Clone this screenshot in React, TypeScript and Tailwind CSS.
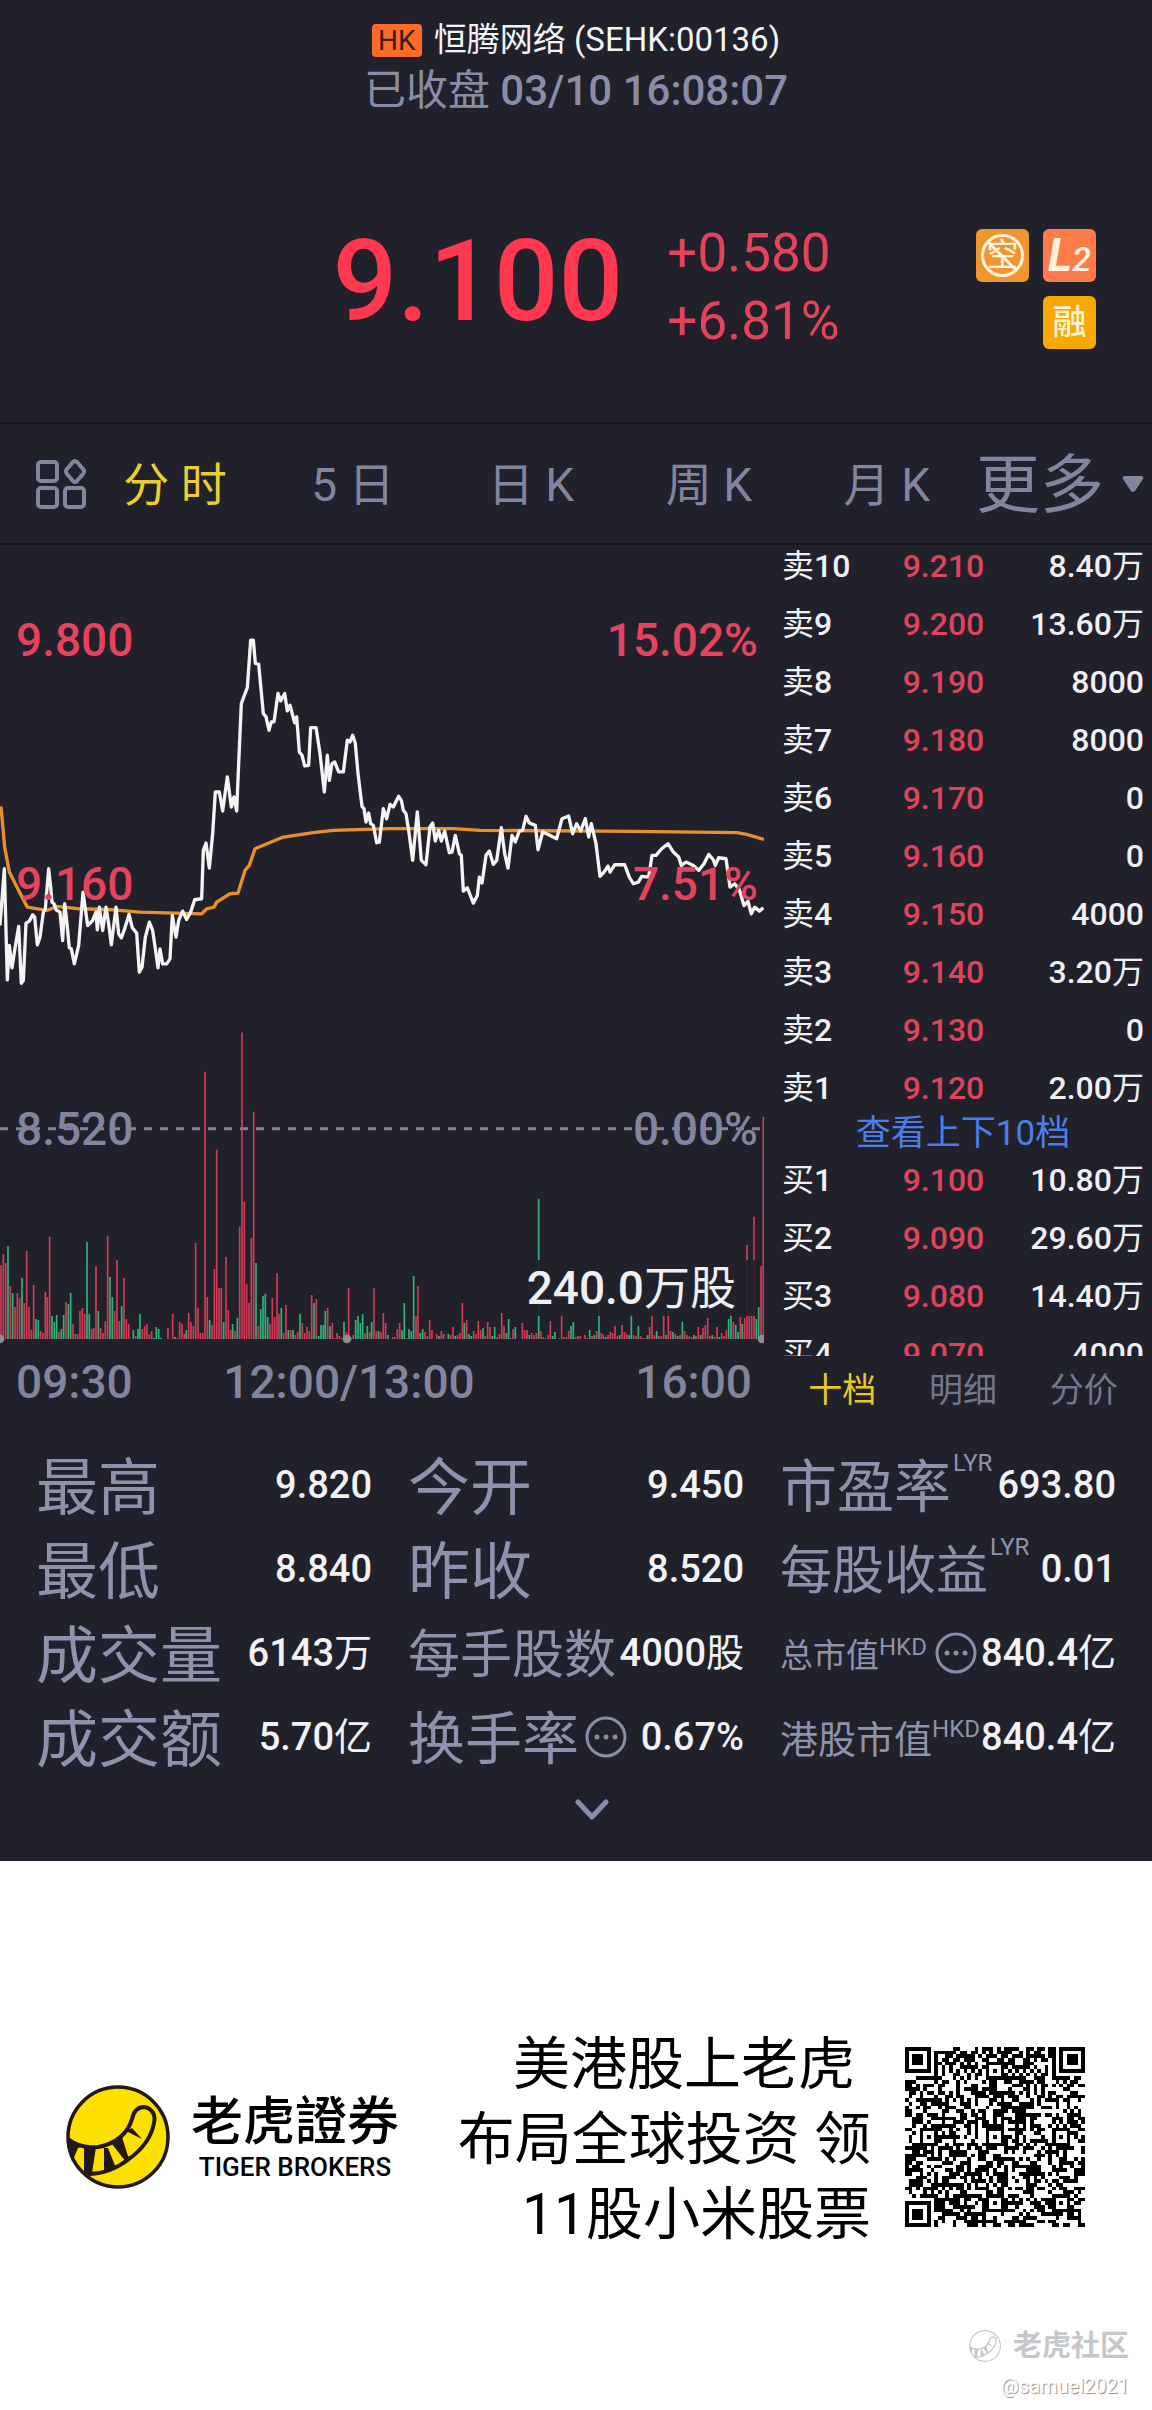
import type { ReactNode } from 'react';

type BookRow = [side: string, price: string, size: string];

const periods = ['分 时', '5 日', '日 K', '周 K', '月 K'];

const asks: BookRow[] = [
  ['卖10', '9.210', '8.40万'],
  ['卖9', '9.200', '13.60万'],
  ['卖8', '9.190', '8000'],
  ['卖7', '9.180', '8000'],
  ['卖6', '9.170', '0'],
  ['卖5', '9.160', '0'],
  ['卖4', '9.150', '4000'],
  ['卖3', '9.140', '3.20万'],
  ['卖2', '9.130', '0'],
  ['卖1', '9.120', '2.00万'],
];

const bids: BookRow[] = [
  ['买1', '9.100', '10.80万'],
  ['买2', '9.090', '29.60万'],
  ['买3', '9.080', '14.40万'],
  ['买4', '9.070', '4000'],
];

// Price and average lines, three units per pixel
const pricePoints =
  '0,975 13,805 22,1138 28,1035 36,1102 44,1050 56,978 64,1148 70,1140 78,968 88,962 98,943 104,950 112,1033 120,1010 130,935 136,925 146,805 152,860 156,905 162,910 168,928 180,935 188,1020 194,910 200,960 208,1042 214,1045 223,1090 236,1035 249,875 258,940 263,975 278,960 288,935 292,988 298,920 308,990 318,920 326,970 334,1033 348,920 356,1000 364,1012 374,985 387,942 397,982 410,998 418,1115 426,1100 436,1010 448,965 458,990 466,1045 474,1102 480,1045 488,1090 500,1090 510,1075 517,945 528,1010 536,960 548,932 560,957 572,935 584,898 605,895 610,750 618,728 628,803 638,700 646,575 658,575 668,632 682,530 694,620 702,590 710,632 716,490 724,310 742,262 752,120 760,120 766,190 776,192 790,340 798,350 807,390 814,365 822,365 834,280 842,302 854,280 862,332 870,315 884,368 890,350 898,455 906,465 914,497 926,495 932,382 948,382 960,460 973,575 982,465 988,540 996,490 1004,485 1016,515 1030,515 1042,420 1050,425 1058,405 1066,430 1074,520 1086,618 1092,625 1098,665 1106,638 1112,670 1120,675 1130,727 1138,725 1150,625 1160,655 1170,612 1180,620 1196,588 1204,600 1210,630 1218,640 1226,690 1238,780 1252,635 1264,780 1278,793 1290,680 1298,668 1306,722 1316,690 1324,722 1334,692 1348,757 1356,755 1366,705 1378,760 1384,765 1390,872 1402,862 1420,908 1432,885 1438,830 1446,848 1458,765 1468,752 1480,792 1490,780 1504,682 1514,760 1524,803 1536,705 1546,725 1558,692 1568,690 1578,648 1588,668 1606,675 1614,748 1628,695 1646,703 1670,715 1686,655 1706,647 1718,700 1730,670 1742,692 1756,655 1766,710 1774,670 1788,730 1800,828 1812,815 1824,797 1830,815 1844,793 1874,793 1888,830 1900,850 1915,845 1925,828 1946,830 1956,765 1968,765 1985,745 2004,730 2020,755 2036,770 2044,795 2058,785 2080,795 2096,810 2112,790 2126,762 2140,778 2146,795 2156,772 2178,775 2190,860 2204,850 2218,868 2232,915 2244,903 2254,940 2264,920 2278,932 2290,922';
const averagePoints =
  '3,618 14,740 28,815 56,870 82,920 140,930 170,918 240,925 340,928 420,935 605,940 620,925 642,920 650,905 690,880 714,878 735,810 748,795 765,745 850,710 940,697 1000,690 1170,685 1360,685 1440,690 1900,693 2210,697 2240,702 2292,717';

// One entry per minute; a negative value is a falling minute
const volumes = [
  74, 85, 76, -93, 53, -46, 32, 46, 41, -61, 36, 88, 32, 9, 54, -20, -19, 8, 6, 47,
  42, 102, -23, -17, -24, 7, -10, -24, 37, -35, -46, 15, 5, 5, 28, 31, 25, -97, -25, 10,
  11, 73, -28, 11, 6, 18, 103, -62, -42, 28, 79, 18, -33, 61, 20, 15, 0, -9, 3, -10,
  -25, 10, 13, 15, 5, 8, -1, -12, -10, -1, 0, 0, 11, 0, 25, -2, 1, 17, 15, 5,
  -9, 26, 17, 13, 96, 31, 6, 6, 267, 42, -19, 14, 70, 189, 51, 51, -17, 82, 29, 9,
  -15, 8, -21, 112, 306, 137, 55, 36, 101, 227, -76, 13, -30, -43, -45, -22, 15, 41, 22, 66,
  25, -31, 6, 34, -9, 9, -9, 4, 7, -25, 16, 6, 12, 8, 44, -36, 40, -3, -14, -14,
  -28, 31, -13, 16, 1, 6, 3, 1, -17, 7, 51, -1, 4, -19, -23, -16, -25, 6, -13, 7,
  -17, 51, 8, -8, 7, 26, 16, -4, 0, 2, 2, 10, 16, -9, -36, 1, -10, -8, -63, 23,
  53, -6, -10, 7, 3, 19, 9, 0, 5, -3, 8, 5, 0, -5, 4, 12, -3, 4, 6, 36,
  -16, 19, -5, -3, 8, 5, 18, 9, -11, 3, 17, 12, -3, -12, 2, 5, 26, 13, -6, -20,
  1, 10, -12, 0, 0, 16, 9, 9, -4, 6, 4, 6, -140, 8, 2, 1, 4, 18, -3, -7,
  0, 1, 25, 2, 2, 8, -13, -17, 2, 3, 3, 0, 4, 1, -9, 3, -4, 8, -40, 6,
  4, -2, 4, 7, 6, 13, 3, -4, 14, 7, 5, -4, -25, 4, 3, -13, 3, 1, 1, -4,
  12, 27, 4, -8, 3, 3, 25, -4, 28, 8, -7, 5, -3, 4, -17, 8, 4, 3, 2, -4,
  3, 12, -4, 11, 14, 21, 3, -4, 2, 12, -2, 6, 3, 9, -20, -27, 17, -14, -7, 22,
  -15, 21, 94, 27, 27, 122, -20, -32, 73, 222,
];

function volumePath(rising: boolean) {
  return volumes
    .map((v, i) => (v !== 0 && v > 0 === rising ? `M${Math.round((i + 0.5) * 6.95)} 2214v${-Math.abs(v) * 3}` : ''))
    .join('');
}

// Version 8 code: 49 modules a side
const QR_SIZE = 49;

function qrPath() {
  let seed = 136;
  let d = '';
  const alignAt = [6, 24, 42];

  for (let y = 0; y < QR_SIZE; y++) {
    for (let x = 0; x < QR_SIZE; x++) {
      seed = (seed * 1103515245 + 12345) % 2147483648;
      let dark = seed / 2147483648 < 0.54;

      if (x === 6 || y === 6) dark = (x + y) % 2 === 0;

      for (const cy of alignAt) {
        for (const cx of alignAt) {
          const r = Math.max(Math.abs(x - cx), Math.abs(y - cy));
          if (r <= 2) dark = r !== 1;
        }
      }
      for (const [cx, cy] of [[3, 3], [45, 3], [3, 45]]) {
        const r = Math.max(Math.abs(x - cx), Math.abs(y - cy));
        if (r <= 4) dark = r !== 2 && r !== 4;
      }
      if (dark) d += `M${x} ${y}h1v1h-1z`;
    }
  }
  return d;
}

// Digits are set heavier than the characters beside them
function Mixed({ text }: { text: string }) {
  const parts = text.split(/([\d.%]+)/).filter(Boolean);
  return (
    <>
      {parts.map((part) => (
        <span key={part} className={/\d/.test(part) ? 'font-medium' : 'font-normal'}>{part}</span>
      ))}
    </>
  );
}

function MoreDots() {
  return (
    <button aria-label="说明" className="shrink-0">
      <svg viewBox="0 0 42 42" className="w-[42px] h-[42px]" fill="none">
        <circle cx="21" cy="21" r="19" stroke="#8b8da6" strokeWidth="3" />
        <circle cx="12" cy="21" r="2.5" fill="#8b8da6" />
        <circle cx="21" cy="21" r="2.5" fill="#8b8da6" />
        <circle cx="30" cy="21" r="2.5" fill="#8b8da6" />
      </svg>
    </button>
  );
}

function Stat({ size, label, value, note }: { size: string; label: string; value: string; note?: ReactNode }) {
  return (
    <div className="h-[84px] flex items-center justify-between whitespace-nowrap">
      <dt className="flex items-center text-[#8f92ab]">
        <span className={`${size} pt-1.5`}>{label}</span>
        {note}
      </dt>
      <dd className="text-[38px] text-[#f2f2f5]">
        <Mixed text={value} />
      </dd>
    </div>
  );
}

function BookTable({ rows, label }: { rows: BookRow[]; label: string }) {
  return (
    <table aria-label={label} className="w-full table-fixed text-[32px] leading-[58px] text-[#f0f0f3]">
      <tbody>
        {rows.map(([side, price, size]) => (
          <tr key={side} className="h-[58px]">
            <th scope="row" className="p-0 text-left font-normal">
              <Mixed text={side} />
            </th>
            <td className="p-0 font-medium text-[#e0435c]">{price}</td>
            <td className="p-0 text-right whitespace-nowrap">
              <Mixed text={size} />
            </td>
          </tr>
        ))}
      </tbody>
    </table>
  );
}

function TigerMark({ className, line, fill }: { className: string; line: string; fill: string }) {
  return (
    <svg viewBox="0 0 104 104" className={className} aria-hidden="true">
      <circle cx="52" cy="52" r="50" fill={fill} stroke={line} strokeWidth="3.5" />
      <path
        d="M2 54C12 62 22 63 32 62C50 59 62 48 66 34C68 25 72 22 78 22C86 23 90 30 88 38C85 54 74 66 63 74C50 84 34 90 18 89"
        fill="none"
        stroke={line}
        strokeWidth="4"
      />
      <path
        d="M2 54l16 7-6 2-6 14zM18 62h12l-4 26h-8zM38 63h4l8 20-12 4zM46 59l10-7 6 19 4 2-6 4zM60 46l6-3 10 11z"
        fill={line}
      />
    </svg>
  );
}

function Quote() {
  return (
    <header>
      <div className="pt-4 flex items-center justify-center gap-3 text-[33px] leading-[48px] text-[#f4f4f6]">
        <span className="w-[50px] h-[33px] rounded-sm bg-[#ff6a28] text-[#3c1c14] text-[28px] leading-[34px] text-center">HK</span>
        <h1>恒腾网络 (SEHK:00136)</h1>
      </div>
      <p className="text-center text-[42px] leading-[54px] text-[#8b8da6]">
        已收盘 <span className="font-medium">03/10 16:08:07</span>
      </p>

      <div className="mt-[78px] pb-14 grid grid-cols-[1fr_auto_1fr] items-center">
        <span />
        <div className="pl-5 flex items-center gap-11 text-[#ff3850]">
          <strong className="text-[114px] leading-[170px] font-medium">9.100</strong>
          <div className="pt-3 text-[53px] leading-[68px] text-[#e5435b]">
            <p>+0.580</p>
            <p>+6.81%</p>
          </div>
        </div>
        <div className="pt-4 pr-14 flex flex-wrap justify-end gap-[14px] text-[#fff3dc]">
          <span className="relative w-[53px] h-[53px] rounded-md bg-[#f0962e] text-[32px] leading-[52px] text-center">
            空
            <svg viewBox="0 0 53 53" className="absolute inset-0" fill="none" stroke="#fff3dc" strokeWidth="3">
              <circle cx="26.5" cy="26.5" r="20" />
              <path d="M12 13l28 28" />
            </svg>
          </span>
          <span className="w-[53px] h-[53px] rounded-md bg-[#ff7a49] flex items-baseline justify-center italic">
            <b className="text-[46px] leading-[53px]">L</b>
            <span className="text-[34px] font-medium">2</span>
          </span>
          <span className="w-full flex justify-end">
            <span className="w-[53px] h-[53px] rounded-md bg-[#f5a902] text-[34px] leading-[52px] font-medium text-center">融</span>
          </span>
        </div>
      </div>
    </header>
  );
}

function PeriodTabs() {
  return (
    <nav className="h-[123px] pl-9 pr-2 flex items-center border-y-2 border-[#16161f] text-[#83859d]">
      <button aria-label="指标">
        <svg viewBox="0 0 50 50" className="w-[50px] h-[50px]" fill="none" stroke="currentColor" strokeWidth="4">
          <rect x="2" y="3" width="19" height="19" rx="3" />
          <rect x="2" y="29" width="19" height="19" rx="3" />
          <rect x="29" y="29" width="19" height="19" rx="3" />
          <path d="M37 3q2-2 4 0l6 7q2 2 0 5l-6 7q-2 2-4 0l-6-7q-2-3 0-5z" strokeLinejoin="round" />
        </svg>
      </button>
      <div className="flex-1 pt-1 grid grid-cols-5 text-[46px]">
        {periods.map((p, i) => (
          <button key={p} className={i === 0 ? 'text-[#ebcf2f]' : 'text-[#83859d]'}>
            {p}
          </button>
        ))}
      </div>
      <button className="flex items-center gap-[18px] text-[64px]">
        <span className="pt-1">更多</span>
        <svg viewBox="0 0 22 18" className="w-[22px] h-[18px]" fill="currentColor">
          <path d="M3 1h16q3 0 2 3l-8 12q-2 2-4 0L1 4Q0 1 3 1z" />
        </svg>
      </button>
    </nav>
  );
}

function Chart() {
  return (
    <div className="min-w-0 font-medium text-[46px] leading-[56px] text-[#83859d]">
      <div className="relative h-[801px]">
        <svg viewBox="0 -165 2292 2400" preserveAspectRatio="none" className="w-full h-full" fill="none">
          <path d="M0 1584H2292" stroke="#83859d" strokeWidth="9" strokeDasharray="24 24" />
          <path d={volumePath(true)} stroke="#d23c56" strokeWidth="5" />
          <path d={volumePath(false)} stroke="#2fb57c" strokeWidth="5" />
          <polyline points={averagePoints} stroke="#e8912c" strokeWidth="10" strokeLinejoin="round" />
          <polyline points={pricePoints} stroke="#f4f4f4" strokeWidth="10" strokeLinejoin="round" />
          <circle cx="0" cy="2214" r="13" fill="#8d8d92" />
          <circle cx="1041" cy="2214" r="13" fill="#8d8d92" />
          <circle cx="2286" cy="2214" r="13" fill="#8d8d92" />
        </svg>
        <div className="absolute inset-x-0 top-[67px] pl-4 pr-1.5 flex justify-between text-[#e5435f]">
          <span>9.800</span>
          <span>15.02%</span>
        </div>
        <div className="absolute inset-x-0 top-[311px] pl-4 pr-1.5 flex justify-between text-[#e5435f]">
          <span>9.160</span>
          <span>7.51%</span>
        </div>
        <div className="absolute inset-x-0 top-[556px] pl-4 pr-1.5 flex justify-between">
          <span>8.520</span>
          <span>0.00%</span>
        </div>
        <span className="absolute right-2 top-[715px] pl-2 pr-5 bg-[#21212b]/90 text-[#f0f0f2]">
          <Mixed text="240.0万股" />
        </span>
      </div>
      <div className="h-[72px] pl-4 pr-3 flex items-center justify-between">
        <span>09:30</span>
        <span className="mr-[70px]">12:00/13:00</span>
        <span>16:00</span>
      </div>
    </div>
  );
}

function OrderBook() {
  return (
    <div className="pl-[18px] pr-2">
      <div className="h-[811px] overflow-hidden">
        <div className="-mt-2">
          <BookTable rows={asks} label="卖盘" />
          <a href="#depth" className="block text-center text-[35px] leading-[34px] text-[#4c7ee8]">
            查看上下10档
          </a>
          <BookTable rows={bids} label="买盘" />
        </div>
      </div>
      <div className="pt-1.5 grid grid-cols-3 text-[34px] leading-[57px] text-[#74768c]">
        <button className="text-[#e8c822]">十档</button>
        <button>明细</button>
        <button>分价</button>
      </div>
    </div>
  );
}

function Stats() {
  const lyr = <span className="pl-0.5 pb-11 text-[24px]">LYR</span>;

  return (
    <section>
      <dl className="pt-6 px-9 grid grid-cols-3 gap-x-9">
        <Stat size="text-[62px]" label="最高" value="9.820" />
        <Stat size="text-[62px]" label="今开" value="9.450" />
        <Stat size="text-[57px]" label="市盈率" value="693.80" note={lyr} />

        <Stat size="text-[62px]" label="最低" value="8.840" />
        <Stat size="text-[62px]" label="昨收" value="8.520" />
        <Stat size="text-[52px]" label="每股收益" value="0.01" note={lyr} />

        <Stat size="text-[62px]" label="成交量" value="6143万" />
        <Stat size="text-[52px]" label="每手股数" value="4000股" />
        <Stat
          size="text-[33px]"
          label="总市值"
          value="840.4亿"
          note={
            <>
              <span className="pr-2 pb-3 text-[24px]">HKD</span>
              <MoreDots />
            </>
          }
        />

        <Stat size="text-[62px]" label="成交额" value="5.70亿" />
        <Stat size="text-[57px]" label="换手率" value="0.67%" note={<span className="pl-1.5 flex"><MoreDots /></span>} />
        <Stat size="text-[38px]" label="港股市值" value="840.4亿" note={<span className="pb-4 text-[24px]">HKD</span>} />
      </dl>
      <div className="h-[82px] pl-8 pb-5 flex items-center justify-center">
        <button aria-label="展开">
          <svg viewBox="0 0 34 22" className="w-[34px] h-[22px]" fill="none" stroke="#8b8da6" strokeWidth="5" strokeLinecap="round" strokeLinejoin="round">
            <path d="M3 3l14 15L31 3" />
          </svg>
        </button>
      </div>
    </section>
  );
}

function Promo() {
  return (
    <footer className="pt-[160px] pb-2 bg-white text-black">
      <div className="pl-[66px] pr-[67px] flex items-center">
        <TigerMark className="w-[104px] h-[104px]" line="#231815" fill="#fce100" />
        <div className="ml-[21px] pt-1 text-center">
          <p className="text-[52px] leading-[56px] font-medium">老虎證券</p>
          <p className="text-[26px] leading-[32px] font-medium">TIGER BROKERS</p>
        </div>
        <p className="ml-auto pt-1.5 text-[57px] leading-[75px] text-right">
          <span className="pr-4">美港股上老虎</span>
          <br />
          布局全球投资 领
          <br />
          11股小米股票
        </p>
        <svg viewBox="0 0 49 49" className="ml-[34px] w-[180px] h-[180px]" shapeRendering="crispEdges" role="img" aria-label="二维码">
          <path d={qrPath()} />
        </svg>
      </div>
      <div className="mt-[73px] pr-[23px] flex flex-col items-end">
        <div className="flex items-center gap-3 text-[29px] leading-[42px] font-bold text-[#c6c7cb]">
          <TigerMark className="w-8 h-8" line="#c6c7cb" fill="#ffffff" />
          老虎社区
        </div>
        <p className="text-[20px] leading-[38px] text-white [text-shadow:1px_1px_1px_#8a8a8e]">@samuel2021</p>
      </div>
    </footer>
  );
}

export default function App() {
  return (
    <div className="bg-[#21212b] font-['Roboto','Noto_Sans_CJK_SC',sans-serif]">
      <Quote />
      <PeriodTabs />
      <main>
        <div className="grid grid-cols-[764fr_388fr]">
          <Chart />
          <OrderBook />
        </div>
        <Stats />
      </main>
      <Promo />
    </div>
  );
}
